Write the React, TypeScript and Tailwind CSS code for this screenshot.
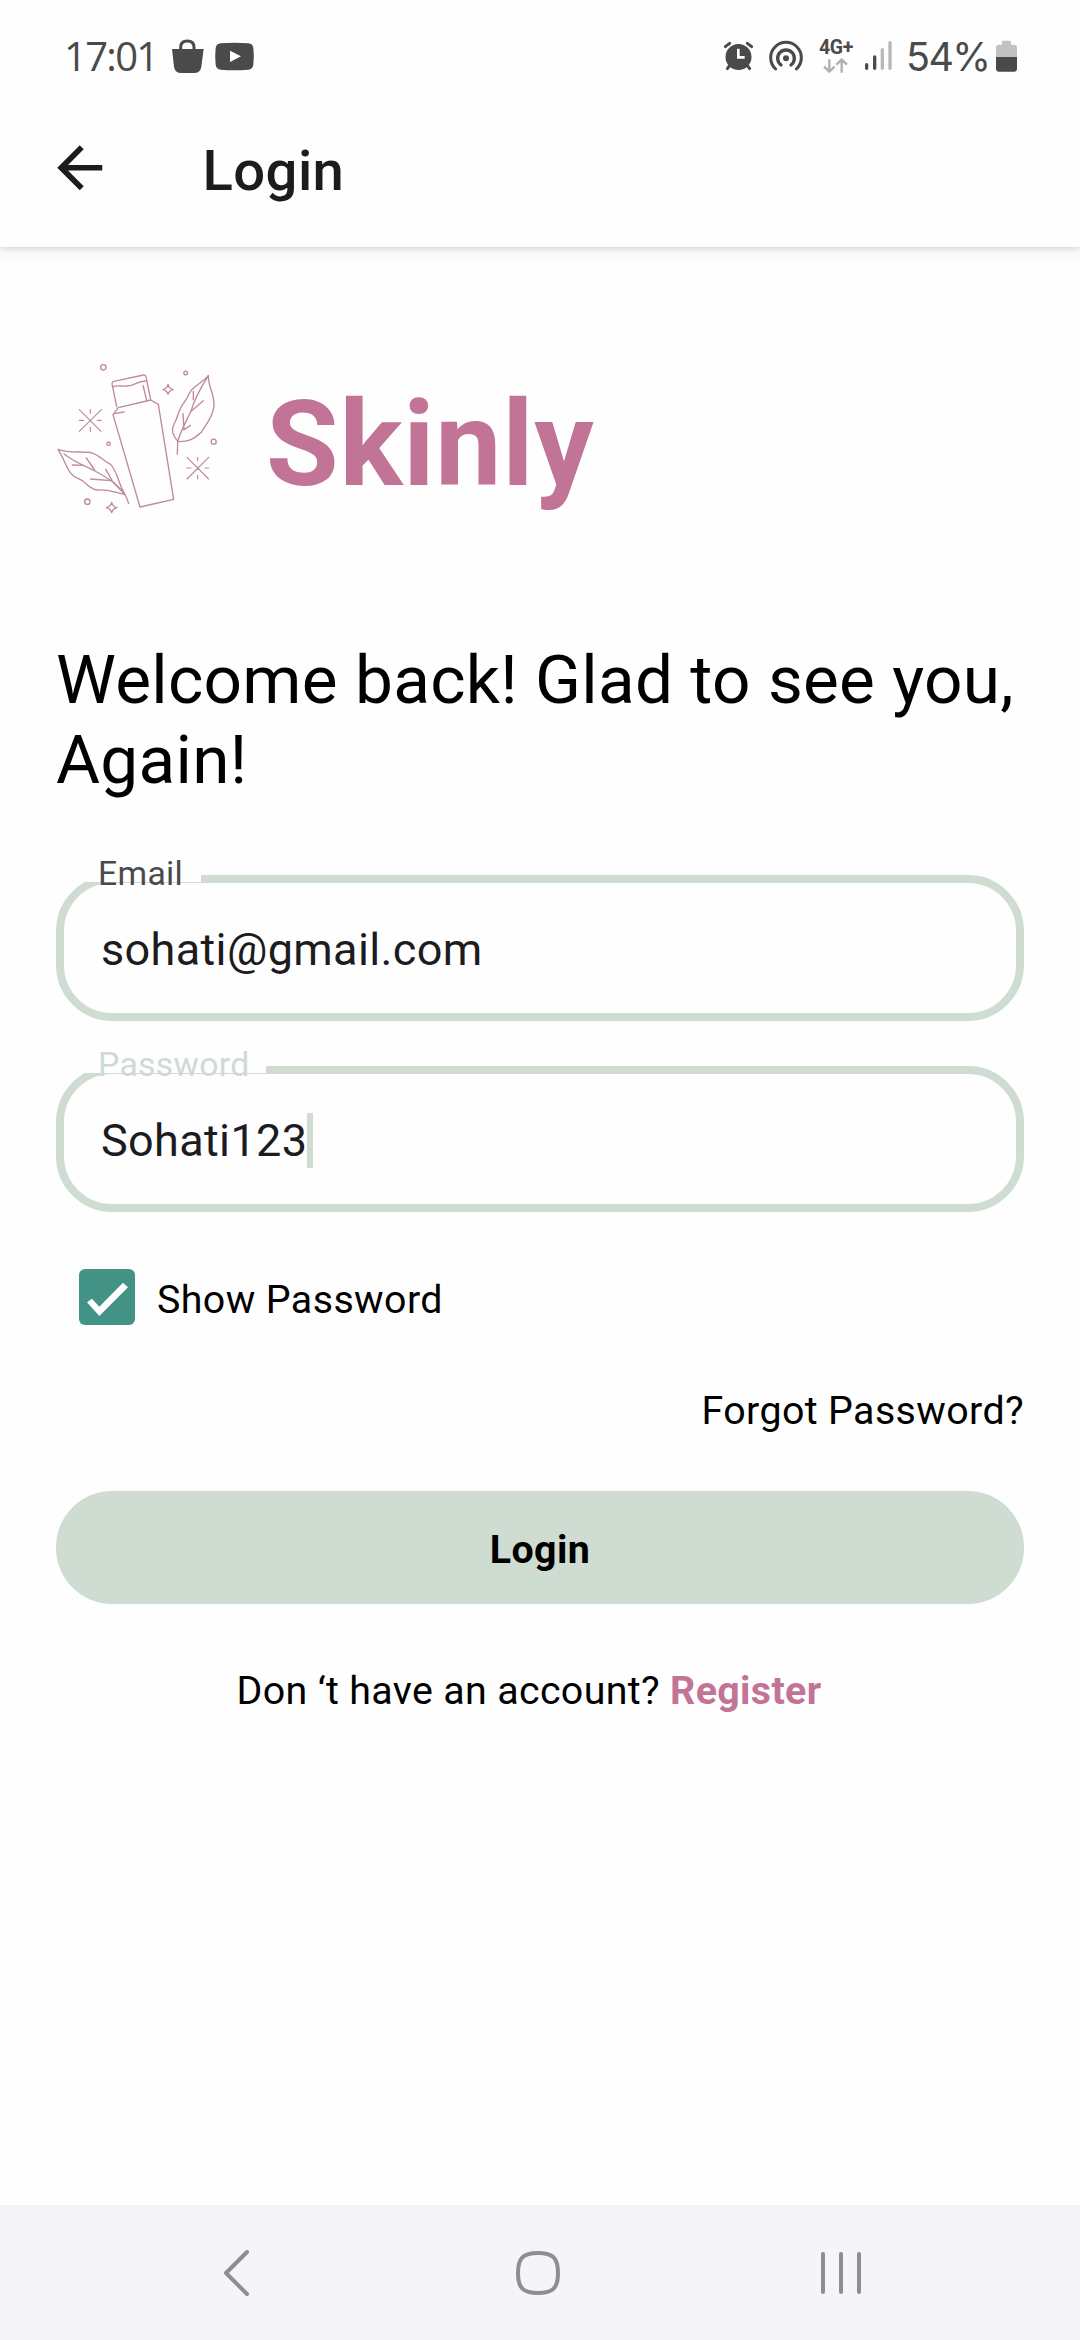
import type { ReactNode } from 'react';

function StatusBar() {
  return (
    <div className="flex h-[90px] items-center pt-[22px] pl-[64px] text-[#4a4a4a]">
      <span className="w-[106px] font-['Open_Sans',sans-serif] text-[40px] leading-[40px] font-normal tracking-[-1.7px]">17:01</span>
      <svg className="h-10 w-[36px]" viewBox="390 48 108 120" fill="#4a4a4a">
        <path d="M396 87H491L484 140Q481 159 462 159H424Q405 159 402 140Z" />
        <path d="M422 88V82Q422 63 442 63Q462 63 462 82V88" fill="none" stroke="#4a4a4a" strokeWidth="9" />
      </svg>
      <svg className="ml-[8px] h-10 w-[42px]" viewBox="522 48 126 120">
        <path
          d="M542 70Q583 66 625 70Q638 71 640 84Q643 109 640 134Q638 148 625 149Q583 152 542 149Q529 148 527 134Q524 109 527 84Q529 71 542 70Z"
          fill="#4a4a4a"
        />
        <path d="M570 92V126L603 109Z" fill="#fff" />
      </svg>

      <svg className="ml-auto h-10 w-[33px] shrink-0" viewBox="66 48 99 120" fill="none" stroke="#4a4a4a" strokeLinecap="round">
        <circle cx="115.500" cy="111" r="39" fill="#4a4a4a" stroke="none" />
        <path d="M76 80L89 70M155 80L142 70" strokeWidth="9" />
        <path d="M88 138L82 146M143 138L149 146" strokeWidth="9" />
        <path d="M115 86V112H134" stroke="#fff" strokeWidth="8" strokeLinecap="butt" />
      </svg>
      <svg className="ml-[12px] h-10 w-[38px] shrink-0" viewBox="198 48 114 120" fill="none" stroke="#4a4a4a" strokeWidth="9" strokeLinecap="round">
        <circle cx="255" cy="115" r="9" fill="#4a4a4a" stroke="none" />
        <path d="M240 135A25 25 0 1 1 270 135" strokeWidth="10" />
        <path d="M224 147A46 46 0 1 1 286 147" />
      </svg>
      <div className="ml-[12px] flex h-[40px] w-[38px] shrink-0 flex-col items-center">
        <span className="mt-[3px] h-[18px] text-[19.5px] leading-[17px] font-bold tracking-[-0.3px]">4G+</span>
        <svg className="h-[18px] w-[30px]" viewBox="360 109 90 54" fill="none" stroke="#b0b0b0" strokeWidth="7">
          <path d="M385 116V152M369 138L385 153L401 138" />
          <path d="M422 156V118M406 132L422 117L438 132" />
        </svg>
      </div>
      <svg className="ml-[8px] h-10 w-[32px] shrink-0" viewBox="486 48 96 120" fill="none" strokeWidth="10" strokeLinecap="round">
        <path d="M497 134V145M521 111V145" stroke="#4a4a4a" />
        <path d="M544 89V145M567 68V145" stroke="#b8b8b8" />
      </svg>
      <span className="mt-[2px] ml-[11px] w-[88px] shrink-0 font-['Inter',sans-serif] text-[39.5px] leading-[40px] tracking-[-1.6px]">54%</span>
      <svg className="mr-[61px] h-10 w-[25px] shrink-0" viewBox="879 48 75 120">
        <path d="M903 65Q903 62 906 62H926Q930 62 930 65V74H940Q948 74 948 82V112H885V82Q885 74 893 74H903Z" fill="#c2c2c2" />
        <path d="M885 111H948V146Q948 155 939 155H894Q885 155 885 146Z" fill="#4a4a4a" />
      </svg>
    </div>
  );
}

function Logo() {
  return (
    <svg
      className="h-[180px] w-[190px] shrink-0"
      viewBox="0 0 570 540"
      fill="none"
      stroke="#be8a9c"
      strokeWidth="4"
      strokeLinecap="round"
      strokeLinejoin="round"
    >
      {/* bottle and cap */}
      <path d="M219 194L235 173L332 150L355 163L401 448L300 471Z" />
      <path d="M221 191L252 186" />
      <path d="M230 170L216 101Q216 95 222 94L310 75Q316 74 318 80L332 149" />
      <path d="M219 110C235 105 244 110 262 108C285 107 292 92 319 93" />
      <path d="M309 106L320 151" />
      {/* right leaf */}
      <path d="M505 77C505 115 524 130 522 170C517 205 493 230 484 247C465 262 455 276 414 275C398 256 394 238 401 225C413 205 412 192 423 172C432 157 440 148 447 132C460 105 482 105 505 77Z" />
      <path d="M505 77C478 120 462 150 454 181C438 216 420 245 413 276L412 312" />
      <path d="M460 124V149M490 152L454 183M429 191L432 237M451 226L431 240" />
      {/* left leaf */}
      <path d="M54 298C88 310 115 304 150 307C180 314 188 333 212 343C235 370 234 400 255 433C225 428 210 418 169 420C140 412 135 391 113 385C83 374 82 343 54 298Z" />
      <path d="M72 312C112 342 145 352 165 363C192 377 210 390 219 396C245 420 258 430 266 461" />
      <path d="M97 345L131 346M139 324L164 360M152 387L213 392M197 358L216 391M219 396L253 431" />
      {/* bursts */}
      <path d="M118 179L183 244M184 179L118 244M151 179V190M151 232V244M118 211H131M172 211H184" strokeWidth="3.500" />
      <path d="M441 322L506 387M506 322L441 387M473 322V332M473 376V387M440 354H453M495 354H506" strokeWidth="3.500" />
      {/* sparkles */}
      <path d="M384 103Q387 116 400 119Q387 122 384 133Q381 122 369 119Q381 116 384 103Z" />
      <path d="M215 457Q218 470 231 473Q218 476 215 488Q212 476 199 473Q212 470 215 457Z" />
      {/* dots */}
      <circle cx="190" cy="52" r="8" />
      <circle cx="437" cy="69" r="5.500" />
      <circle cx="521" cy="275" r="7.500" />
      <circle cx="206" cy="281" r="5" />
      <circle cx="142" cy="455" r="8" />
    </svg>
  );
}

function Field({ label, labelClass, notchClass, className, children }: {
  label: string;
  labelClass: string;
  notchClass: string;
  className: string;
  children: ReactNode;
}) {
  return (
    <div className={`relative flex h-[146px] items-center rounded-[56px] border-8 border-[#cedcd2] pt-[2px] pl-[37px] ${className}`}>
      <span className={`absolute -top-[12px] left-[22px] h-[11px] bg-[#fefefe] ${notchClass}`} />
      <span className={`absolute -top-[33px] left-[34px] text-[33.75px] leading-[48px] tracking-[0.3px] ${labelClass}`}>{label}</span>
      {children}
    </div>
  );
}

export default function App() {
  return (
    <div className="flex h-[2340px] w-[1080px] flex-col overflow-hidden bg-[#fefefe] font-['Roboto',sans-serif] text-black">
      <header className="h-[247px] shrink-0 bg-[#fefefe] shadow-[0_1px_5px_rgba(0,0,0,0.14),0_4px_16px_rgba(0,0,0,0.07)]">
        <StatusBar />
        <div className="flex h-[157px] items-center pl-[46px] text-[#1c1c1c]">
          <svg className="-mt-px h-[67.5px] w-[67.5px]" viewBox="0 0 24 24" fill="currentColor">
            <path d="M20 11H7.830l5.590-5.590L12 4l-8 8 8 8 1.410-1.410L7.830 13H20v-2z" />
          </svg>
          <h1 className="mt-[5px] ml-[89px] text-[56.25px] leading-[64px] font-medium tracking-[0.4px]">Login</h1>
        </div>
      </header>

      <main className="flex flex-1 flex-col px-[56px]">
        <div className="mt-[103px] -ml-4 flex h-[180px] items-center">
          <Logo />
          <span className="mt-[10px] ml-[36px] text-[118px] leading-[140px] font-bold tracking-[0.8px] text-[#c27496]">Skinly</span>
        </div>

        <h2 className="mt-[110px] text-[67.5px] leading-[80px] tracking-[0.29px] whitespace-nowrap">
          Welcome back! Glad to see you,
          <br />
          Again!
        </h2>

        <Field label="Email" labelClass="text-[#4a4a4c]" notchClass="w-[115px]" className="mt-[75px]">
          <span className="text-[45px] leading-[55px] tracking-[0.35px] text-[#1c1c1e]">sohati@gmail.com</span>
        </Field>
        <Field label="Password" labelClass="text-[#cfdad3]" notchClass="w-[180px]" className="mt-[45px]">
          <span className="text-[45px] leading-[55px] tracking-[0.35px] text-[#1c1c1e]">Sohati123</span>
          <span className="h-[55px] w-[6px] bg-[#cedcd2]" />
        </Field>

        <label className="mt-[57px] ml-[23px] flex h-[56px] items-center">
          <span className="h-[56px] w-[56px] rounded-[6px] bg-[#429285]">
            <svg className="h-[56px] w-[56px]" viewBox="0 0 56 56" fill="#fff">
              <path d="M8 33.300L20.300 47L49 18.300L44 13.700L20.300 37.700L13 29.700Z" />
            </svg>
          </span>
          <span className="mt-[5px] ml-[22px] text-[39.375px] leading-[46px] tracking-[0.4px]">Show Password</span>
        </label>

        <a className="mt-[63px] self-end text-[39.375px] leading-[46px] tracking-[0.38px]">Forgot Password?</a>

        <button className="mt-[57px] h-[113px] rounded-[56px] bg-[#cedcd2] pt-[5px] text-[39.375px] font-bold tracking-[0.4px]">
          Login
        </button>

        <p className="mt-[64px] ml-[180.5px] text-[39.375px] leading-[46px] tracking-[0.35px] whitespace-nowrap">
          Don ‘t have an account? <b className="text-[#c27496]">Register</b>
        </p>
      </main>

      <nav className="flex h-[135px] shrink-0 items-center bg-[#f5f5f8] text-[#8e8e90]">
        <svg className="ml-[220px] h-[50px] w-[33px]" viewBox="0 0 33 50" fill="none" stroke="currentColor" strokeWidth="4" strokeLinecap="round" strokeLinejoin="round">
          <path d="M27 4L6 25L27 46" />
        </svg>
        <svg className="ml-[260px] h-[50px] w-[50px]" viewBox="0 0 50 50" fill="none" stroke="currentColor" strokeWidth="4">
          <path d="M25 5C40 5 45 10 45 25S40 45 25 45S5 40 5 25S10 5 25 5Z" />
        </svg>
        <svg className="ml-[252px] h-[50px] w-[50px]" viewBox="0 0 50 50" fill="none" stroke="currentColor" strokeWidth="4" strokeLinecap="round">
          <path d="M8 6V44M26 6V44M44 6V44" />
        </svg>
      </nav>
    </div>
  );
}
